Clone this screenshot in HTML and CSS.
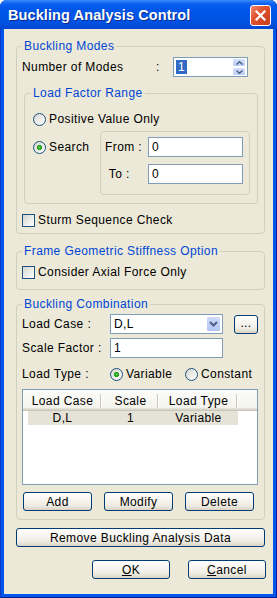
FILE: index.html
```html
<!DOCTYPE html>
<html>
<head>
<meta charset="utf-8">
<link rel="stylesheet" href="styles.css">
</head>
<body>
<div class="window">
  <div class="titlebar">
    <span class="title">Buckling Analysis Control</span>
    <span class="close"><svg width="11" height="11" viewBox="0 0 11 11"><path d="M1.5 1.5 L9.5 9.5 M9.5 1.5 L1.5 9.5" stroke="#fff" stroke-width="2.2" stroke-linecap="square" fill="none"/></svg></span>
  </div>
  <div class="client">
    <fieldset class="group g1">
      <legend>Buckling Modes</legend>
      <div class="modes">
        <span>Number of Modes</span>
        <span>:</span>
        <div class="spin">
          <span class="val"><span class="sel">1</span></span>
          <span class="btns">
            <span class="sb"><svg width="7" height="4" viewBox="0 0 7 4"><path d="M0.5 3.5 L3.5 0.7 L6.5 3.5" stroke="#4d6185" stroke-width="1.4" fill="none"/></svg></span>
            <span class="sb"><svg width="7" height="4" viewBox="0 0 7 4"><path d="M0.5 0.5 L3.5 3.3 L6.5 0.5" stroke="#4d6185" stroke-width="1.4" fill="none"/></svg></span>
          </span>
        </div>
      </div>
      <fieldset class="group lfr">
        <legend>Load Factor Range</legend>
        <label class="radio r-pos"><span class="rb"></span>Positive Value Only</label>
        <div class="search-row">
          <label class="radio r-search"><span class="rb on"></span>Search</label>
          <div class="box">
            <div class="frow"><span>From :</span><span class="edit">0</span></div>
            <div class="frow"><span>&nbsp;To :</span><span class="edit">0</span></div>
          </div>
        </div>
      </fieldset>
      <label class="check sturm"><span class="cb"></span>Sturm Sequence Check</label>
    </fieldset>

    <fieldset class="group g2">
      <legend>Frame Geometric Stiffness Option</legend>
      <label class="check"><span class="cb"></span>Consider Axial Force Only</label>
    </fieldset>

    <fieldset class="group g3">
      <legend>Buckling Combination</legend>
      <div class="lc-row">
        <span>Load Case :</span>
        <div class="combo">
          <span class="ctext">D,L</span>
          <span class="carrow"><svg width="9" height="6" viewBox="0 0 9 6"><path d="M1 1 L4.5 4.5 L8 1" stroke="#4d6185" stroke-width="2" fill="none"/></svg></span>
        </div>
        <button class="btn dots">...</button>
      </div>
      <div class="sf-row">
        <span>Scale Factor :</span>
        <span class="edit">1</span>
      </div>
      <div class="lt-row">
        <span>Load Type :</span>
        <label class="radio r-var"><span class="rb on"></span>Variable</label>
        <label class="radio"><span class="rb"></span>Constant</label>
      </div>
      <div class="list">
        <div class="lhead">
          <span class="hc">Load Case</span>
          <span class="hc">Scale</span>
          <span class="hc">Load Type</span>
          <span class="hc last"></span>
        </div>
        <div class="lrow">
          <span>D,L</span>
          <span>1</span>
          <span>Variable</span>
        </div>
      </div>
      <div class="btnrow">
        <button class="btn">Add</button>
        <button class="btn">Modify</button>
        <button class="btn">Delete</button>
      </div>
    </fieldset>

    <button class="btn remove">Remove Buckling Analysis Data</button>
    <div class="okrow">
      <button class="btn ok"><u>O</u>K</button>
      <button class="btn ok"><u>C</u>ancel</button>
    </div>
  </div>
</div>
</body>
</html>
```

FILE: styles.css
```css
* { box-sizing: border-box; }
html, body { margin: 0; padding: 0; background: #ffffff; }
body {
  font-family: "Liberation Sans", Arial, sans-serif;
  font-size: 12px;
  letter-spacing: 0.4px;
  line-height: 14px;
  color: #000;
}
.window {
  width: 277px;
  height: 598px;
  display: flex;
  flex-direction: column;
  background: #0055ea;
  border-radius: 7px 7px 0 0;
  overflow: hidden;
  box-shadow: inset 1px 0 #0a38c8, inset -1px 0 #00209c, inset 0 -1px #001a90;
}
.titlebar {
  height: 29px;
  flex: none;
  display: flex;
  align-items: center;
  padding: 2px 6px 0 8px;
  background: linear-gradient(#3c8ff9 0, #2272f5 2px, #0a5fee 4px, #0057ea 8px, #0054e6 18px, #0050df 24px, #0046d4 29px);
}
.title {
  flex: 1;
  color: #fff;
  font-weight: bold;
  font-size: 14.5px;
  letter-spacing: 0.1px;
  line-height: 17px;
  text-shadow: 1px 1px #0b2a8a;
}
.close {
  width: 21px;
  height: 21px;
  border: 1px solid #fff;
  border-radius: 3px;
  background: linear-gradient(135deg, #f08a6c 0%, #e0522f 40%, #c43d1a 100%);
  display: flex;
  align-items: center;
  justify-content: center;
}
.client {
  flex: 1;
  margin: 0 4px 4px;
  background: #ece9d8;
  padding: 10px 8px 0 12px;
  display: flex;
  flex-direction: column;
}
.group {
  margin: 0;
  border: 1px solid #d0d0bf;
  border-radius: 4px;
  padding: 0 5px;
  min-width: 0;
}
.group legend {
  padding: 0 2px;
  color: #0046d5;
  line-height: 14px;
  height: 14px;
}
.g1 { padding-bottom: 6px; }
.modes {
  display: grid;
  grid-template-columns: 134px 17px 75px;
  align-items: center;
  height: 20px;
  margin-top: 4px;
}
.spin {
  height: 20px;
  border: 1px solid #7f9db9;
  background: #fff;
  display: flex;
}
.spin .val { flex: 1; padding: 2px 0 0 2px; }
.spin .sel { background: #316ac5; color: #fff; padding: 0 2px; }
.spin .btns { width: 16px; display: flex; flex-direction: column; padding: 0 1px 0 1px; }
.spin .sb {
  flex: 1;
  background: linear-gradient(#d5e1fc, #b9cdf7);
  border: 1px solid #fff;
  border-radius: 2px;
  display: flex;
  align-items: center;
  justify-content: center;
}
.lfr { margin: 9px 1px 0 2px; padding: 0 6px 8px; }
.radio { display: flex; align-items: center; height: 14px; }
.rb {
  width: 13px;
  height: 13px;
  flex: none;
  border-radius: 50%;
  border: 1px solid #1c5180;
  background: linear-gradient(135deg, #d6d6ce, #fff);
  margin-right: 3px;
}
.rb.on {
  background: radial-gradient(circle at 50% 50%, #7ee05e 0, #2aa524 1.3px, #21a121 2.3px, transparent 2.9px), linear-gradient(135deg, #d6d6ce, #fff);
}
.r-pos { margin: 12px 0 0 2px; }
.search-row { display: flex; margin-top: 5px; }
.r-search { margin: 9px 0 0 2px; width: 67px; flex: none; }
.box {
  width: 150px;
  flex: none;
  border: 1px solid #d0d0bf;
  border-radius: 4px;
  padding: 5px 6px 10px 4px;
  display: flex;
  flex-direction: column;
  gap: 7px;
}
.frow { display: grid; grid-template-columns: 43px 95px; align-items: center; }
.edit {
  height: 20px;
  border: 1px solid #7f9db9;
  background: #fff;
  padding: 2px 3px;
  line-height: 14px;
}
.check { display: flex; align-items: center; height: 14px; }
.cb {
  width: 13px;
  height: 13px;
  flex: none;
  border: 1px solid #1c5180;
  background: linear-gradient(135deg, #d6d6ce, #fff);
  margin-right: 3px;
}
.sturm { margin-top: 9px; }
.g2 { margin-top: 10px; padding-top: 7px; padding-bottom: 10px; }
.g3 { margin-top: 7px; padding-bottom: 8px; }
.lc-row {
  display: grid;
  grid-template-columns: 88px 113px 35px;
  align-items: center;
  margin-top: 3px;
  height: 20px;
}
.combo {
  height: 20px;
  border: 1px solid #7f9db9;
  background: #fff;
  display: flex;
  padding: 1px;
}
.ctext { flex: 1; padding: 1px 0 0 2px; }
.carrow {
  width: 15px;
  border-radius: 2px;
  border: 1px solid #fff;
  background: linear-gradient(#cddbfb, #b1c6f5);
  display: flex;
  align-items: center;
  justify-content: center;
}
.btn {
  font-family: "Liberation Sans", Arial, sans-serif;
  font-size: 12px;
  letter-spacing: 0.4px;
  line-height: 14px;
  color: #000;
  height: 19px;
  padding: 0;
  margin: 0;
  border: 1px solid #003c74;
  border-radius: 3px;
  background: linear-gradient(#ffffff 0%, #f6f5f0 40%, #eeebe2 75%, #d9d3c7 100%);
  display: flex;
  align-items: center;
  justify-content: center;
}
.dots { margin-left: 11px; width: 24px; height: 19px; padding-bottom: 3px; }
.sf-row {
  display: grid;
  grid-template-columns: 88px 113px;
  align-items: center;
  margin-top: 4px;
}
.lt-row {
  display: flex;
  align-items: center;
  margin-top: 9px;
  height: 14px;
}
.lt-row > span { width: 88px; }
.r-var { width: 75px; }
.list {
  margin-top: 8px;
  width: 236px;
  height: 96px;
  border: 1px solid #7f9db9;
  background: #fff;
}
.lhead {
  display: grid;
  grid-template-columns: 79px 57px 79px 19px;
  height: 21px;
  padding-top: 4px;
  padding-bottom: 3px;
  background: linear-gradient(#e2e2da, #e2e2da) left bottom 2px / 100% 1px no-repeat,
              linear-gradient(#d9d6c9, #d9d6c9) left bottom 1px / 100% 1px no-repeat,
              linear-gradient(#cbc7b8, #cbc7b8) left bottom / 100% 1px no-repeat,
              linear-gradient(#fcfcfa, #f2f1ea);
}
.hc {
  text-align: center;
  background: linear-gradient(#cbc7b8, #cbc7b8) right 1px top 0 / 1px 14px no-repeat,
              linear-gradient(#fff, #fff) right 0 top 0 / 1px 14px no-repeat;
}
.hc.last { background: none; }
.lrow {
  display: grid;
  grid-template-columns: 79px 57px 79px;
  width: 215px;
  height: 14px;
  background: linear-gradient(to right, transparent 5px, #e5e3d7 5px);
}
.lrow span { text-align: center; }
.btnrow {
  display: flex;
  gap: 12px;
  padding-left: 1px;
  margin-top: 7px;
}
.btnrow .btn { width: 69px; }
.remove { margin-top: 8px; width: 249px; }
.okrow {
  display: flex;
  gap: 18px;
  padding-left: 76px;
  margin-top: 13px;
  margin-right: -1px;
}
.ok { width: 78px; }
```
